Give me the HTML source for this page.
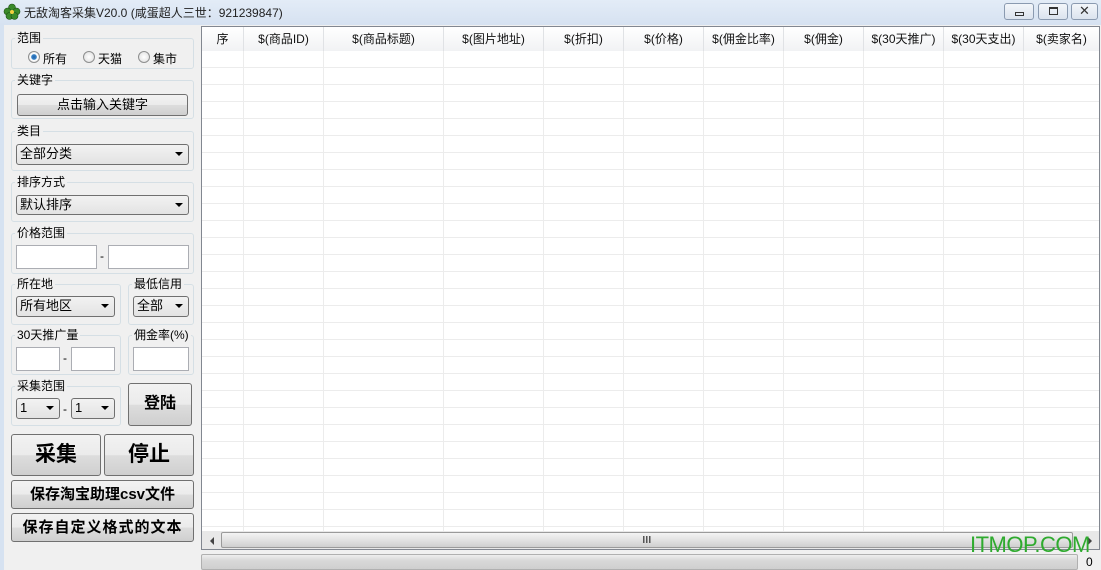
<!DOCTYPE html>
<html><head><meta charset="utf-8"><style>
*{box-sizing:border-box;margin:0;padding:0}
body{width:1101px;height:570px;overflow:hidden;background:#f0f0f0;font-family:"Liberation Sans","Noto Sans CJK SC",sans-serif;font-size:12px;color:#000;position:relative}
.a{position:absolute}
.title{left:0;top:0;width:1101px;height:25px;background:linear-gradient(#e3ecf7,#d6e2f1)}
.frame{left:0;top:25px;width:4px;height:545px;background:#d6e2f1}
.tb{top:3px;height:17px;border:1px solid #8a9ab0;border-radius:3px;background:linear-gradient(#f3f6fa,#dbe3ee)}
.grp{border:1px solid #d5dfe5;border-radius:3px}
.lbl{background:#f0f0f0;padding:0 2px;line-height:14px}
.btn{border:1px solid #707070;border-radius:3px;background:linear-gradient(#f2f2f2 0,#ebebeb 50%,#dddddd 51%,#cfcfcf 100%);text-align:center}
.cb{border:1px solid #707070;border-radius:3px;background:linear-gradient(#f2f2f2,#e3e3e3);padding-left:3px;line-height:18px;font-size:13px}
.cb:after{content:"";position:absolute;right:5px;top:7px;border-left:4px solid transparent;border-right:4px solid transparent;border-top:4px solid #000}
.in{background:#fff;border:1px solid #abadb3}
.rd{width:12px;height:12px;border-radius:50%;border:1px solid #8e8f8f;background:radial-gradient(#fff,#dcdcdc)}
.hd{top:27px;height:24px;line-height:24px;text-align:center;background:linear-gradient(#fff,#f1f2f4);border-right:1px solid #e0e2e5;font-size:12px;color:#111}
.vl{top:51px;width:1px;height:480px;background:#ececec}
</style></head><body>
<div class="a title"></div>
<div class="a frame"></div>
<svg class="a" style="left:3px;top:3px" width="18" height="18" viewBox="0 0 18 18"><g fill="#3a8a2a" stroke="#1d4d14" stroke-width=".6"><circle cx="9" cy="4.5" r="3.5"/><circle cx="4.5" cy="8.5" r="3.5"/><circle cx="13.5" cy="8.5" r="3.5"/><circle cx="6.5" cy="13" r="3.5"/><circle cx="11.5" cy="13" r="3.5"/></g><circle cx="9" cy="9" r="2" fill="#f4d03f"/></svg>
<div class="a" style="left:24px;top:4px;font-size:12px;color:#222">无敌淘客采集V20.0 (咸蛋超人三世：921239847)</div>
<div class="a tb" style="left:1004px;width:30px"><div class="a" style="left:10px;top:8px;width:9px;height:4px;border:1px solid #333"></div></div>
<div class="a tb" style="left:1038px;width:30px"><div class="a" style="left:10px;top:3px;width:9px;height:8px;border:1px solid #333;border-top-width:2px"></div></div>
<div class="a tb" style="left:1071px;width:27px;text-align:center;line-height:14px;font-size:13px;color:#333">✕</div>

<div class="a grp" style="left:11px;top:38px;width:183px;height:31px"></div>
<div class="a lbl" style="left:15px;top:31px">范围</div>
<div class="a rd" style="left:28px;top:51px;background:radial-gradient(#1f5fa8 0,#3b86c9 35%,#fff 45%,#dcdcdc)"></div><div class="a" style="left:43px;top:50px;font-size:12px">所有</div>
<div class="a rd" style="left:83px;top:51px"></div><div class="a" style="left:98px;top:50px;font-size:12px">天猫</div>
<div class="a rd" style="left:138px;top:51px"></div><div class="a" style="left:153px;top:50px;font-size:12px">集市</div>
<div class="a grp" style="left:11px;top:80px;width:183px;height:39px"></div>
<div class="a lbl" style="left:15px;top:73px">关键字</div>
<div class="a btn" style="left:17px;top:94px;width:171px;height:22px;line-height:20px;font-size:13px">点击输入关键字</div>
<div class="a grp" style="left:11px;top:131px;width:183px;height:40px"></div>
<div class="a lbl" style="left:15px;top:124px">类目</div>
<div class="a cb" style="left:16px;top:144px;width:173px;height:21px">全部分类</div>
<div class="a grp" style="left:11px;top:182px;width:183px;height:40px"></div>
<div class="a lbl" style="left:15px;top:175px">排序方式</div>
<div class="a cb" style="left:16px;top:195px;width:173px;height:20px">默认排序</div>
<div class="a grp" style="left:11px;top:233px;width:183px;height:41px"></div>
<div class="a lbl" style="left:15px;top:226px">价格范围</div>
<div class="a in" style="left:16px;top:245px;width:81px;height:24px"></div>
<div class="a" style="left:100px;top:249px">-</div>
<div class="a in" style="left:108px;top:245px;width:81px;height:24px"></div>
<div class="a grp" style="left:11px;top:284px;width:110px;height:41px"></div>
<div class="a lbl" style="left:15px;top:277px">所在地</div>
<div class="a cb" style="left:16px;top:296px;width:99px;height:21px">所有地区</div>
<div class="a grp" style="left:128px;top:284px;width:66px;height:41px"></div>
<div class="a lbl" style="left:132px;top:277px">最低信用</div>
<div class="a cb" style="left:133px;top:296px;width:56px;height:21px">全部</div>
<div class="a grp" style="left:11px;top:335px;width:110px;height:40px"></div>
<div class="a lbl" style="left:15px;top:328px">30天推广量</div>
<div class="a in" style="left:16px;top:347px;width:44px;height:24px"></div>
<div class="a" style="left:63px;top:351px">-</div>
<div class="a in" style="left:71px;top:347px;width:44px;height:24px"></div>
<div class="a grp" style="left:128px;top:335px;width:66px;height:40px"></div>
<div class="a lbl" style="left:132px;top:328px">佣金率(%)</div>
<div class="a in" style="left:133px;top:347px;width:56px;height:24px"></div>
<div class="a grp" style="left:11px;top:386px;width:110px;height:40px"></div>
<div class="a lbl" style="left:15px;top:379px">采集范围</div>
<div class="a cb" style="left:16px;top:398px;width:44px;height:21px">1</div>
<div class="a" style="left:63px;top:402px">-</div>
<div class="a cb" style="left:71px;top:398px;width:44px;height:21px">1</div>
<div class="a btn" style="left:128px;top:383px;width:64px;height:43px;line-height:40px;font-size:16px;font-weight:bold">登陆</div>
<div class="a btn" style="left:11px;top:434px;width:90px;height:42px;line-height:40px;font-size:21px;font-weight:bold">采集</div>
<div class="a btn" style="left:104px;top:434px;width:90px;height:42px;line-height:40px;font-size:21px;font-weight:bold">停止</div>
<div class="a btn" style="left:11px;top:480px;width:183px;height:29px;line-height:27px;font-size:15px;font-weight:bold">保存淘宝助理csv文件</div>
<div class="a btn" style="left:11px;top:513px;width:183px;height:29px;line-height:27px;font-size:15px;font-weight:bold;letter-spacing:1px">保存自定义格式的文本</div>

<div class="a" style="left:201px;top:26px;width:899px;height:524px;border:1px solid #828790;background:#fff"></div>
<div class="a" style="left:202px;top:51px;width:897px;height:480px;background:repeating-linear-gradient(to bottom,transparent 0,transparent 16px,#ececec 16px,#ececec 17px);"></div>
<div class="a vl" style="left:243px"></div>
<div class="a vl" style="left:323px"></div>
<div class="a vl" style="left:443px"></div>
<div class="a vl" style="left:543px"></div>
<div class="a vl" style="left:623px"></div>
<div class="a vl" style="left:703px"></div>
<div class="a vl" style="left:783px"></div>
<div class="a vl" style="left:863px"></div>
<div class="a vl" style="left:943px"></div>
<div class="a vl" style="left:1023px"></div>
<div class="a" style="left:202px;top:50px;width:897px;height:1px;background:#d5d5d5"></div>
<div class="a hd" style="left:202px;width:42px">序</div>
<div class="a hd" style="left:244px;width:80px">$(商品ID)</div>
<div class="a hd" style="left:324px;width:120px">$(商品标题)</div>
<div class="a hd" style="left:444px;width:100px">$(图片地址)</div>
<div class="a hd" style="left:544px;width:80px">$(折扣)</div>
<div class="a hd" style="left:624px;width:80px">$(价格)</div>
<div class="a hd" style="left:704px;width:80px">$(佣金比率)</div>
<div class="a hd" style="left:784px;width:80px">$(佣金)</div>
<div class="a hd" style="left:864px;width:80px">$(30天推广)</div>
<div class="a hd" style="left:944px;width:80px">$(30天支出)</div>
<div class="a hd" style="left:1024px;width:75px;border-right:none">$(卖家名)</div>
<div class="a" style="left:202px;top:531px;width:897px;height:18px;background:#e8e8e8"></div>
<div class="a" style="left:210px;top:537px;border-top:4px solid transparent;border-bottom:4px solid transparent;border-right:4px solid #444"></div>
<div class="a" style="left:221px;top:532px;width:852px;height:16px;border:1px solid #9a9a9a;border-radius:2px;background:linear-gradient(#f3f3f3,#e2e2e2 50%,#cfcfcf)"></div>
<svg class="a" style="left:643px;top:536px" width="8" height="8"><g fill="#555"><rect x="0" y="0" width="1.5" height="7"/><rect x="3" y="0" width="1.5" height="7"/><rect x="6" y="0" width="1.5" height="7"/></g></svg>
<div class="a" style="left:1088px;top:537px;border-top:4px solid transparent;border-bottom:4px solid transparent;border-left:4px solid #444"></div>
<div class="a" style="left:201px;top:554px;width:877px;height:16px;border:1px solid #b0b0b0;border-radius:2px;background:linear-gradient(#eee,#d8d8d8 40%,#cfcfcf)"></div>
<div class="a" style="left:1086px;top:555px;font-size:12px">0</div>
<div class="a" style="left:970px;top:532px;font-size:22px;color:#2eaa2e;letter-spacing:-0.5px">ITMOP.COM</div>
</body></html>
